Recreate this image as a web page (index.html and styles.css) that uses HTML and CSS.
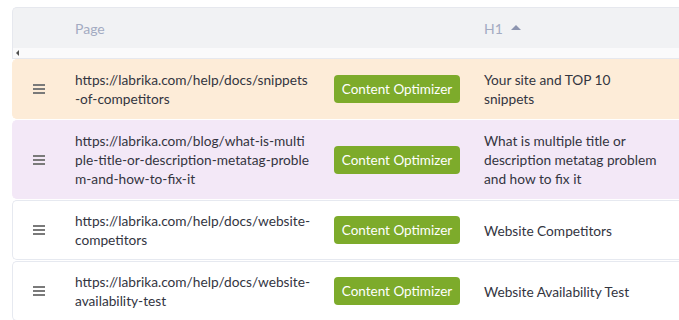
FILE: index.html
```html
<!DOCTYPE html>
<html>
<head>
<meta charset="utf-8">
<link rel="stylesheet" href="styles.css">
</head>
<body>
<div class="table">
  <div class="head">
    <div class="c-drag"></div>
    <div class="c-url">Page</div>
    <div class="c-btn"></div>
    <div class="c-h1">H1 <span class="sort"></span></div>
  </div>
  <div class="scroll"><span class="arrow"></span></div>
  <div class="row row-orange">
    <div class="c-drag"><span class="burger"></span></div>
    <div class="c-url">https://labrika.com/help/docs/snippets-of-competitors</div>
    <div class="c-btn"><button class="btn">Content Optimizer</button></div>
    <div class="c-h1">Your site and TOP 10 snippets</div>
  </div>
  <div class="row row-violet">
    <div class="c-drag"><span class="burger"></span></div>
    <div class="c-url">https://labrika.com/blog/what-is-multiple-title-or-description-metatag-problem-and-how-to-fix-it</div>
    <div class="c-btn"><button class="btn">Content Optimizer</button></div>
    <div class="c-h1">What is multiple title or description metatag problem and how to fix it</div>
  </div>
  <div class="row">
    <div class="c-drag"><span class="burger"></span></div>
    <div class="c-url">https://labrika.com/help/docs/website-competitors</div>
    <div class="c-btn"><button class="btn">Content Optimizer</button></div>
    <div class="c-h1">Website Competitors</div>
  </div>
  <div class="row">
    <div class="c-drag"><span class="burger"></span></div>
    <div class="c-url">https://labrika.com/help/docs/website-availability-test</div>
    <div class="c-btn"><button class="btn">Content Optimizer</button></div>
    <div class="c-h1">Website Availability Test</div>
  </div>
</div>
</body>
</html>
```
FILE: styles.css
```css
html, body {
  margin: 0;
  padding: 0;
  background: #ffffff;
  overflow: hidden;
}
body {
  font-family: "Lato", "Noto Sans", sans-serif;
  font-size: 13.7px;
  color: #33353f;
}
.table {
  margin: 7px 0 0 12px;
  width: 720px;
}
.head {
  display: flex;
  align-items: center;
  height: 40px;
  background: #f1f2f4;
  border-top: 1px solid #e6e8ee;
  border-left: 1px solid #e6e8ee;
  border-top-left-radius: 5px;
  color: #a3abc2;
}
.head .c-url, .head .c-h1 { font-size: 14px; }
.head .c-h1 { display: flex; align-items: center; }
.sort {
  display: inline-block;
  width: 0;
  height: 0;
  border-left: 5px solid transparent;
  border-right: 5px solid transparent;
  border-bottom: 5px solid #8d95b0;
  margin-left: 8px;
  margin-top: -2px;
}
.scroll {
  height: 10px;
  background: #fafafb;
  border-left: 1px solid #e6e8ee;
  border-bottom: 1px solid #e6e8ee;
  display: flex;
  align-items: center;
  padding-left: 3px;
}
.arrow {
  width: 0;
  height: 0;
  border-top: 3px solid transparent;
  border-bottom: 3px solid transparent;
  border-right: 3px solid #505050;
}
.row {
  display: flex;
  align-items: center;
  border: 1px solid #e6e9f0;
  border-right: none;
  border-radius: 5px 0 0 5px;
  padding: 10px 0;
  margin-top: 1px;
  line-height: 19px;
  background: #ffffff;
}
.row-orange { background: #fdecd8; border-color: #fdecd8; margin-top: 0; }
.row-violet { background: #f3e8f7; border-color: #f3e8f7; }
.c-drag {
  width: 62px;
  flex: none;
  display: flex;
  align-items: center;
  padding-left: 20px;
  box-sizing: border-box;
}
.c-url {
  width: 259px;
  flex: none;
  padding-right: 24px;
  box-sizing: border-box;
  word-break: break-all;
}
.c-btn {
  width: 150px;
  flex: none;
}
.c-h1 {
  flex: none;
  width: 180px;
}
.burger {
  display: block;
  width: 12px;
  height: 2px;
  background: #7a7a7a;
  box-shadow: 0 4px 0 #7a7a7a, 0 -4px 0 #7a7a7a;
}
.btn {
  font-family: inherit;
  font-size: 13.5px;
  color: #ffffff;
  background: #7dab2b;
  border: none;
  border-radius: 4px;
  width: 126px;
  height: 28px;
  padding: 0;
  cursor: pointer;
}
```
